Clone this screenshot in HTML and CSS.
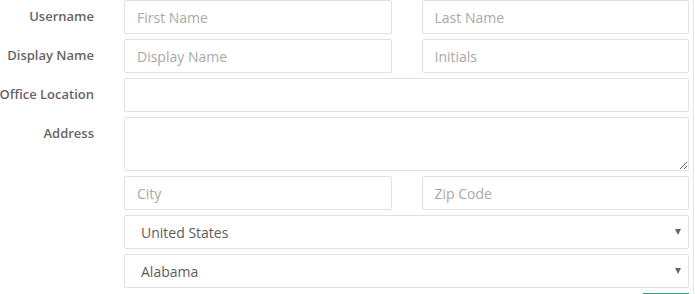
FILE: index.html
```html
<!DOCTYPE html>
<html lang="en">
<head>
    <meta charset="UTF-8">
    <meta name="viewport" content="width=device-width, initial-scale=1.0">
    <title>User Details</title>
    <link rel="stylesheet" href="styles.css">
</head>
<body>
    <div id="panel">
        <form class="user-form">
            <label class="field-label">Username</label>
            <div class="pair">
                <input type="text" placeholder="First Name">
                <input type="text" placeholder="Last Name">
            </div>

            <label class="field-label">Display Name</label>
            <div class="pair">
                <input type="text" placeholder="Display Name">
                <input type="text" placeholder="Initials">
            </div>

            <label class="field-label">Office Location</label>
            <input type="text">

            <label class="field-label">Address</label>
            <textarea></textarea>

            <div class="blank"></div>
            <div class="pair">
                <input type="text" placeholder="City">
                <input type="text" placeholder="Zip Code">
            </div>

            <div class="blank"></div>
            <div class="select-wrap">
                <select>
                    <option>United States</option>
                    <option>Canada</option>
                </select>
            </div>

            <div class="blank"></div>
            <div class="select-wrap">
                <select>
                    <option>Alabama</option>
                    <option>Alaska</option>
                </select>
            </div>

            <div class="blank"></div>
            <div class="actions">
                <div class="save-btn" aria-label="Save"></div>
            </div>
        </form>
    </div>
</body>
</html>
```

FILE: styles.css
```css
body {
    margin: 0;
    font-family: "Open Sans", Arial, sans-serif;
    background-color: #fff;
    color: #555;
}
#panel {
    width: 689px;
    height: 294px;
    overflow: hidden;
    padding-right: 4px;
    border-right: 1px solid #e6e6e6;
}
.user-form {
    display: grid;
    grid-template-columns: 94px 1fr;
    column-gap: 30px;
    row-gap: 5px;
}
.field-label {
    font-size: 13px;
    font-weight: 600;
    color: #666;
    text-align: right;
    white-space: nowrap;
    padding-top: 7px;
    direction: rtl; /* let long labels spill to the left */
}
.pair {
    display: grid;
    grid-template-columns: 1fr 1fr;
    column-gap: 30px;
}
input,
textarea,
select {
    box-sizing: border-box;
    width: 100%;
    font-family: "Open Sans", Arial, sans-serif;
    font-size: 14px;
    color: #5c5c5c;
    border: 1px solid #e2e2e2;
    border-radius: 2px;
    background-color: #fff;
    margin: 0;
    outline: none;
}
input {
    height: 34px;
    padding: 0 12px;
}
input::placeholder {
    color: #a9a9a9;
}
textarea {
    height: 54px;
    padding: 6px 12px;
    resize: vertical;
    display: block;
}
.select-wrap {
    position: relative;
}
select {
    height: 34px;
    padding: 0 30px 0 16px;
    appearance: none;
    -webkit-appearance: none;
}
.select-wrap::after {
    content: "";
    position: absolute;
    right: 8px;
    top: 14px;
    border-left: 3px solid transparent;
    border-right: 3px solid transparent;
    border-top: 6px solid #666;
    pointer-events: none;
}
.actions {
    display: flex;
    justify-content: flex-end;
}
.save-btn {
    width: 46px;
    height: 30px;
    border-top: 2px solid #2fa57e;
    background-color: #fff;
}
```
